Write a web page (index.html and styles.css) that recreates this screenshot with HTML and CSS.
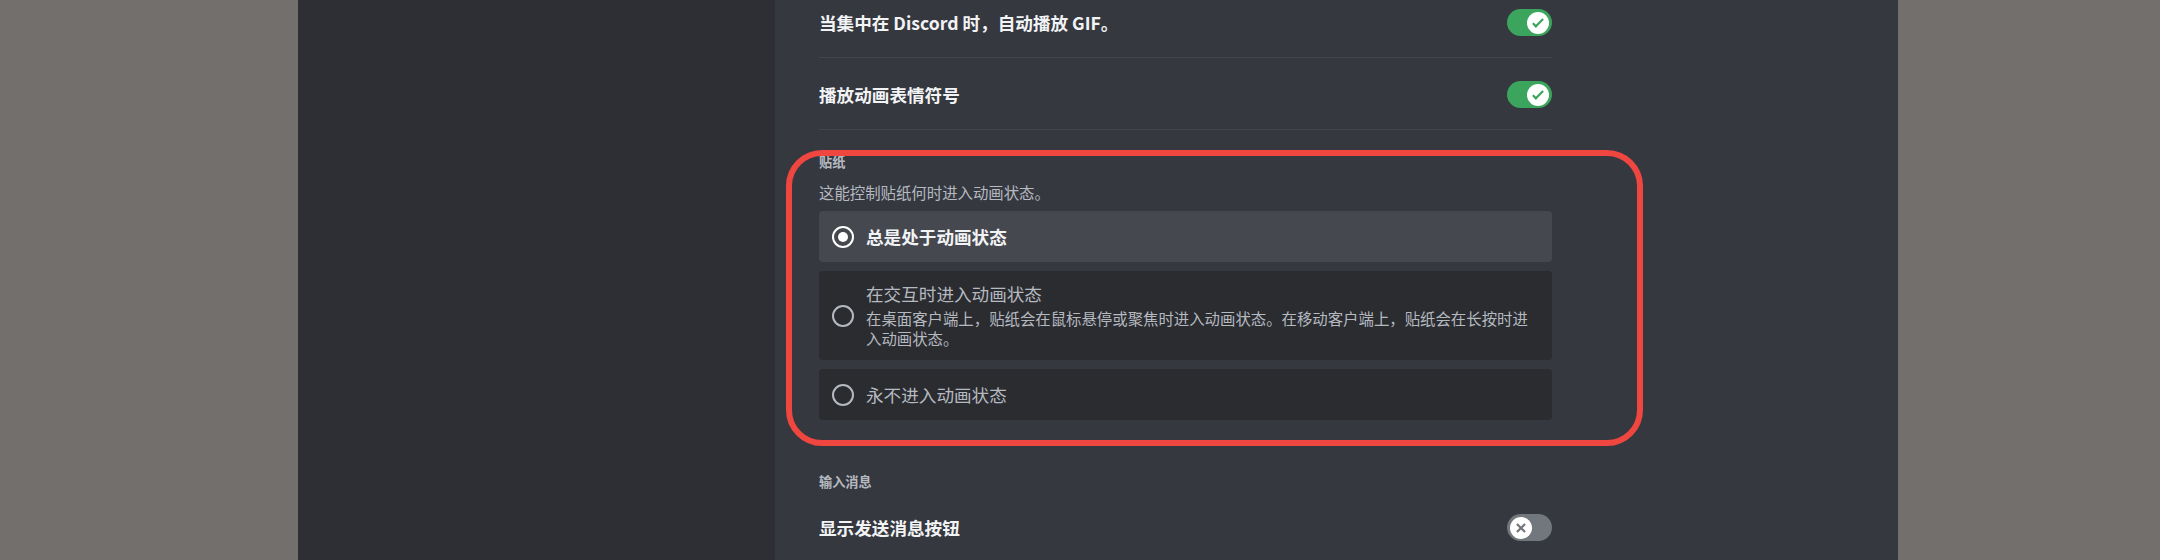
FILE: index.html
```html
<!DOCTYPE html>
<html lang="zh-CN">
<head>
<meta charset="utf-8">
<title>设置</title>
<link rel="stylesheet" href="styles.css">
</head>
<body>
<div class="shell">
  <aside class="sidebar"></aside>
  <main class="content">
    <div class="column">
      <div class="row first">
        <div class="row-title">当集中在 Discord 时，自动播放 GIF。</div>
        <div class="toggle on">
          <span class="knob">
            <svg viewBox="0 0 20 20" width="20" height="20"><path fill="#3ba55d" d="M7.89561 14.8538L6.30462 13.2629L14.3099 5.25755L15.9009 6.84854L7.89561 14.8538Z"/><path fill="#3ba55d" d="M4.08643 11.0903L5.67742 9.49929L9.4485 13.2704L7.85751 14.8614L4.08643 11.0903Z"/></svg>
          </span>
        </div>
      </div>
      <div class="row">
        <div class="row-title">播放动画表情符号</div>
        <div class="toggle on">
          <span class="knob">
            <svg viewBox="0 0 20 20" width="20" height="20"><path fill="#3ba55d" d="M7.89561 14.8538L6.30462 13.2629L14.3099 5.25755L15.9009 6.84854L7.89561 14.8538Z"/><path fill="#3ba55d" d="M4.08643 11.0903L5.67742 9.49929L9.4485 13.2704L7.85751 14.8614L4.08643 11.0903Z"/></svg>
          </span>
        </div>
      </div>

      <section class="section">
        <div class="highlight"></div>
        <h5 class="eyebrow">贴纸</h5>
        <div class="desc">这能控制贴纸何时进入动画状态。</div>
        <div class="options">
          <div class="option selected">
            <span class="radio"></span>
            <div class="option-text">
              <div class="option-title">总是处于动画状态</div>
            </div>
          </div>
          <div class="option">
            <span class="radio"></span>
            <div class="option-text">
              <div class="option-title">在交互时进入动画状态</div>
              <div class="option-desc">在桌面客户端上，贴纸会在鼠标悬停或聚焦时进入动画状态。在移动客户端上，贴纸会在长按时进入动画状态。</div>
            </div>
          </div>
          <div class="option">
            <span class="radio"></span>
            <div class="option-text">
              <div class="option-title">永不进入动画状态</div>
            </div>
          </div>
        </div>
      </section>

      <h5 class="eyebrow eyebrow-2">输入消息</h5>
      <div class="row last">
        <div class="row-title">显示发送消息按钮</div>
        <div class="toggle off">
          <span class="knob">
            <svg viewBox="0 0 20 20" width="20" height="20"><path fill="#72767d" d="M5.13231 6.72963L6.7233 5.13864L14.855 13.2704L13.264 14.8614L5.13231 6.72963Z"/><path fill="#72767d" d="M13.2704 5.13864L14.8614 6.72963L6.72963 14.8614L5.13864 13.2704L13.2704 5.13864Z"/></svg>
          </span>
        </div>
      </div>
    </div>
  </main>
</div>
</body>
</html>
```

FILE: styles.css
```css
html, body {
  margin: 0;
  padding: 0;
}
body {
  background: #736f6d;
  height: 560px;
  overflow: hidden;
  font-family: "Noto Sans CJK SC", "Noto Sans", sans-serif;
}
.shell {
  display: flex;
  margin-left: 298px;
  width: 1600px;
  height: 560px;
}
.sidebar {
  width: 477px;
  background: #2e2f34;
  flex: none;
}
.content {
  flex: 1;
  background: #36383f;
  padding-left: 44px;
  overflow: hidden;
}
.column {
  width: 733px;
}
.row {
  display: flex;
  align-items: center;
  justify-content: space-between;
  padding: 23px 0 21px;
  border-bottom: 1px solid #44464d;
}
.row.first {
  margin-top: -14px;
}
.row.last {
  border-bottom: none;
  padding-top: 24px;
}
.row-title {
  font-size: 17.6px;
  line-height: 22px;
  font-weight: 600;
  color: #f2f3f5;
}
.toggle {
  width: 45px;
  height: 27px;
  border-radius: 14px;
  box-sizing: border-box;
  padding: 2.5px 3px;
  display: flex;
  flex: none;
}
.toggle.on {
  background: #3ba55d;
  justify-content: flex-end;
}
.toggle.off {
  background: #72767d;
  justify-content: flex-start;
}
.knob {
  width: 22px;
  height: 22px;
  border-radius: 50%;
  background: #ffffff;
  display: flex;
  align-items: center;
  justify-content: center;
}
.section {
  position: relative;
  padding-top: 24px;
}
.highlight {
  position: absolute;
  left: -33px;
  top: 20px;
  width: 857px;
  height: 296px;
  box-sizing: border-box;
  border: 6px solid #ef4640;
  border-radius: 36px;
  pointer-events: none;
}
.eyebrow {
  margin: 0;
  font-size: 13.2px;
  line-height: 16px;
  font-weight: 600;
  color: #b5bac1;
}
.desc {
  margin-top: 12px;
  font-size: 15.4px;
  line-height: 20px;
  color: #b5bac1;
}
.options {
  margin-top: 9px;
  display: flex;
  flex-direction: column;
  gap: 9px;
}
.option {
  display: flex;
  align-items: center;
  gap: 12px;
  padding: 12px 13px;
  border-radius: 4px;
  background: #2b2c30;
  min-height: 27px;
}
.option.selected {
  background: #46484f;
}
.radio {
  width: 22px;
  height: 22px;
  box-sizing: border-box;
  border: 2px solid #b5bac1;
  border-radius: 50%;
  flex: none;
  display: flex;
  align-items: center;
  justify-content: center;
}
.option.selected .radio {
  border: 2.5px solid #ffffff;
}
.option.selected .radio::after {
  content: "";
  width: 10px;
  height: 10px;
  border-radius: 50%;
  background: #ffffff;
}
.option-text {
  flex: 1;
  min-width: 0;
}
.option-title {
  font-size: 17.6px;
  line-height: 22px;
  font-weight: 400;
  color: #b5bac1;
}
.option.selected .option-title {
  font-weight: 600;
  color: #f2f3f5;
}
.option-desc {
  margin-top: 3px;
  font-size: 15.4px;
  line-height: 20px;
  color: #b5bac1;
}
.eyebrow-2 {
  margin-top: 54px;
}
```
